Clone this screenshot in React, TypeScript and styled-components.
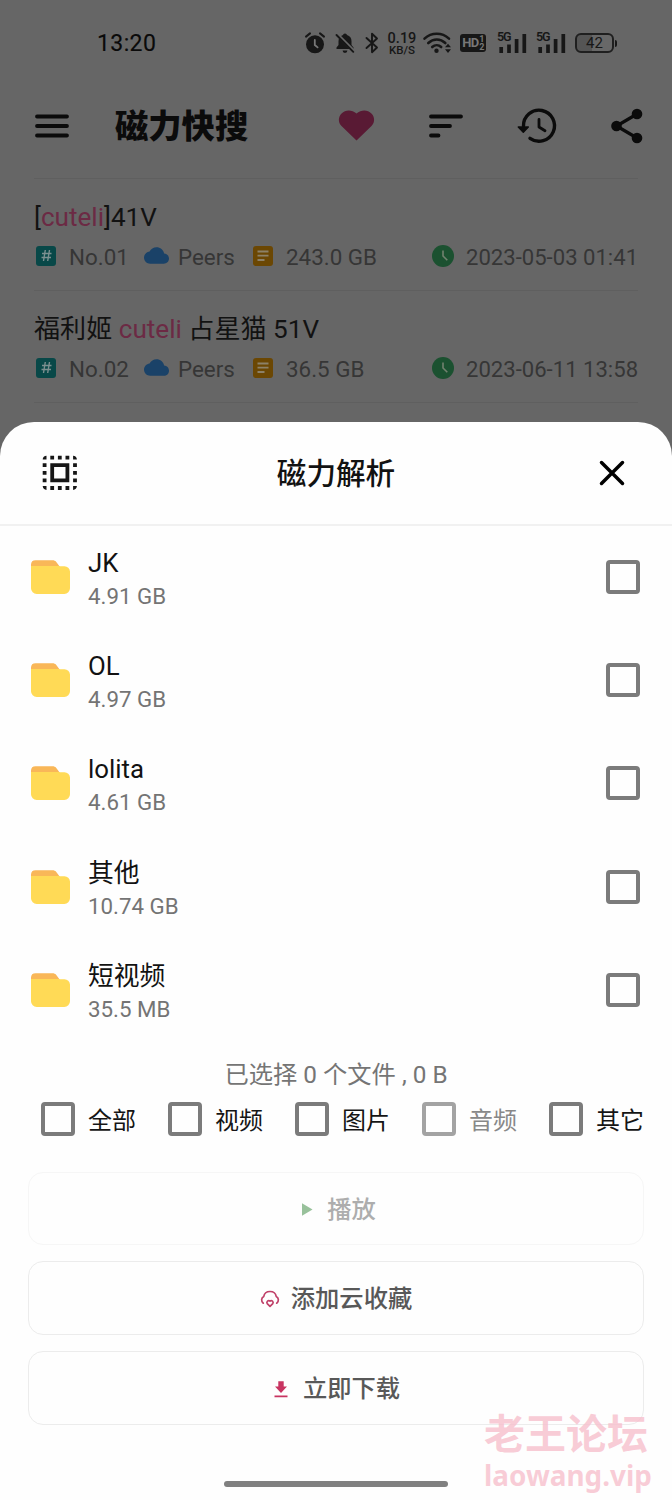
import React from "react";
import styled, { createGlobalStyle } from "styled-components";

const GlobalStyle = createGlobalStyle`
  *, *::before, *::after { box-sizing: border-box; }
  body {
    margin: 0;
    background: #666;
    font-family: Roboto, "Noto Sans CJK SC", sans-serif;
  }
`;

const Screen = styled.div`
  position: relative;
  width: 672px;
  height: 1500px;
  overflow: hidden;
  background: #666;
  color: #121212;
`;

const Icon = styled.svg<{ $left?: number }>`
  display: block;
  flex: none;
  overflow: visible;
  margin-left: ${(p) => p.$left ?? 0}px;
`;

/* ---------- status bar ---------- */

const StatusBar = styled.header`
  display: flex;
  align-items: center;
  justify-content: space-between;
  height: 86px;
  padding: 0 55px 0 97px;
`;

const Clock = styled.time`
  padding-top: 2px;
  font-size: 23px;
  line-height: 28px;
  letter-spacing: 0.4px;
  color: #0a0a0a;
  -webkit-text-stroke: 0.15px #0a0a0a;
`;

const StatusIcons = styled.div`
  display: flex;
  align-items: center;
  color: #171717;
`;

const Speed = styled.div`
  display: flex;
  flex-direction: column;
  align-items: center;
  width: 30px;
  margin: 3px 6px 0 8px;
  font-weight: 500;
  white-space: nowrap;
`;

const SpeedLine = styled.span<{ $size: number; $height: number }>`
  font-size: ${(p) => p.$size}px;
  line-height: ${(p) => p.$height}px;
`;

const HdBadge = styled.div`
  display: flex;
  align-items: center;
  justify-content: center;
  width: 26px;
  height: 18px;
  margin: 0 11px 0 8px;
  border-radius: 3px;
  background: #171717;
  color: #777;
  font-size: 13px;
  font-weight: 700;
  line-height: 18px;
  letter-spacing: -0.8px;
`;

const HdDigits = styled.span`
  display: flex;
  flex-direction: column;
  margin-left: 1px;
  font-size: 9px;
  line-height: 8px;
`;

const Signal = styled.div`
  position: relative;
  width: 30px;
  height: 22px;
  margin-right: 9px;
`;

const SignalLabel = styled.span`
  position: absolute;
  top: -1px;
  left: 0;
  font-size: 12.5px;
  font-weight: 600;
  line-height: 12px;
  letter-spacing: -1.1px;
`;

const Battery = styled.div`
  display: flex;
  align-items: center;
  width: 42px;
`;

const BatteryBody = styled.div`
  width: 39px;
  height: 20px;
  border: 2px solid #1f1f1f;
  border-radius: 6px;
  background: linear-gradient(90deg, #555 0 42%, #686868 42%);
  font-size: 15px;
  line-height: 17px;
  text-align: center;
`;

const BatteryTip = styled.div`
  width: 2px;
  height: 7px;
  margin-left: 1px;
  border-radius: 0 2px 2px 0;
  background: #171717;
`;

/* ---------- app bar ---------- */

const AppBar = styled.nav`
  display: flex;
  align-items: center;
  height: 92px;
  padding: 0 28px 13px 34px;
  color: #0b0b0b;
`;

const AppTitle = styled.h1`
  flex: 1;
  margin: 0 0 0 45px;
  padding-top: 2px;
  font-size: 33.3px;
  font-weight: 900;
  line-height: 40px;
`;

const Actions = styled.div`
  display: flex;
  align-items: center;
`;

/* ---------- results ---------- */

const Results = styled.ul`
  margin: 0 34px;
  padding: 0;
  list-style: none;
`;

const Result = styled.li`
  height: 112px;
  padding-top: 22px;
  border-top: 1px solid #5f5f5f;
  &:last-child {
    height: 113px;
    border-bottom: 1px solid #5f5f5f;
  }
`;

const ResultTitle = styled.h2`
  margin: 0;
  font-size: 26.1px;
  font-weight: 400;
  line-height: 32px;
  white-space: pre;
`;

const Mark = styled.em`
  font-style: normal;
  color: #6c2a44;
`;

const Meta = styled.div`
  display: flex;
  align-items: center;
  height: 30px;
  margin-top: 9px;
  color: #363636;
  font-size: 22.4px;
  line-height: 30px;
  white-space: nowrap;
`;

const MetaItem = styled.span<{ $width?: number; $gap: number }>`
  display: flex;
  align-items: center;
  gap: ${(p) => p.$gap}px;
  ${(p) => (p.$width ? `width: ${p.$width}px;` : "")}
  svg { margin-top: -3px; }
`;

const DateItem = styled(MetaItem)`
  margin-left: auto;
  width: 206px;
  font-size: 22.1px;
`;

const Badge = styled.span<{ $color: string }>`
  display: flex;
  align-items: center;
  justify-content: center;
  width: 20px;
  height: 20px;
  margin: -3px 1px 0 2px;
  border-radius: 3px;
  background: ${(p) => p.$color};
  svg { margin: 0; }
`;

/* ---------- sheet ---------- */

const Sheet = styled.section`
  position: absolute;
  inset: 422px 0 0 0;
  display: flex;
  flex-direction: column;
  border-radius: 34px 34px 0 0;
  background: #fefefe;
`;

const SheetHeader = styled.div`
  display: grid;
  grid-template-columns: 80px 1fr 80px;
  align-items: center;
  height: 104px;
  padding: 0 20px;
  border-bottom: 2px solid #f1f1f1;
`;

const SheetTitle = styled.h2`
  margin: 0;
  padding-top: 2px;
  font-size: 29.6px;
  font-weight: 500;
  line-height: 40px;
  text-align: center;
`;

const Cell = styled.div`
  display: flex;
  justify-content: center;
`;

const Files = styled.ul`
  margin: -0.6px 0 0;
  padding: 0 32px 0 30px;
  list-style: none;
`;

const File = styled.li`
  display: flex;
  align-items: center;
  height: 103.2px;
`;

const FileText = styled.div`
  flex: 1;
  margin: 5px 0 0 18px;
`;

const FileName = styled.div`
  font-size: 25.8px;
  line-height: 33px;
`;

const FileSize = styled.div`
  font-size: 22.3px;
  line-height: 32px;
  color: #747474;
`;

const Box = styled.span<{ $muted?: boolean }>`
  flex: none;
  width: 34px;
  height: 34px;
  border: 4px solid ${(p) => (p.$muted ? "#a3a3a3" : "#7b7b7b")};
  border-radius: 4px;
`;

const Summary = styled.p`
  margin: 15.6px 0 0;
  font-size: 24.3px;
  line-height: 36px;
  text-align: center;
  color: #757575;
`;

const Filters = styled.div`
  display: flex;
  height: 34px;
  margin-top: 9px;
  padding-left: 41px;
`;

const Filter = styled.label<{ $muted?: boolean }>`
  display: flex;
  align-items: center;
  gap: 13px;
  width: 127px;
  flex: none;
  color: ${(p) => (p.$muted ? "#888" : "#151515")};
  font-size: 24px;
  line-height: 34px;
  white-space: nowrap;
`;

const FilterName = styled.span`
  padding-top: 4px;
`;

const Buttons = styled.div`
  display: flex;
  flex-direction: column;
  gap: 16px;
  margin: 36px 28px 0;
`;

const Button = styled.button<{ $gap: number; $shift?: number; $muted?: boolean }>`
  display: flex;
  align-items: center;
  justify-content: center;
  gap: ${(p) => p.$gap}px;
  height: ${(p) => (p.$muted ? 73 : 74)}px;
  padding: 3px 0 0 ${(p) => p.$shift ?? 0}px;
  border: 1px solid ${(p) => (p.$muted ? "#f6f6f6" : "#ececec")};
  border-radius: 15px;
  background: transparent;
  color: ${(p) => (p.$muted ? "#adadad" : "#585858")};
  font-family: inherit;
  font-size: 24.3px;
  font-weight: 500;
  line-height: 36px;
`;

const HomeBar = styled.div`
  width: 224px;
  height: 6px;
  margin: 56px auto 0;
  border-radius: 3px;
  background: #808080;
`;

const Watermark = styled.div`
  position: absolute;
  top: 1406px;
  left: 484px;
  display: flex;
  flex-direction: column;
  color: rgba(247, 190, 204, 0.78);
  font-weight: 700;
  white-space: nowrap;
`;

const WatermarkName = styled.span`
  font-family: "Noto Sans CJK SC", sans-serif;
  font-size: 41px;
  line-height: 50px;
`;

const WatermarkSite = styled.span`
  margin-top: 4px;
  font-family: "Noto Sans", sans-serif;
  font-size: 27.9px;
  line-height: 30px;
`;

const AlarmIcon = () => (
  <Icon width="22" height="22" viewBox="0 0 22 22">
    <circle cx="11" cy="12.3" r="9" fill="currentColor" />
    <path d="M2 4.600 6 1.400M20 4.600 16 1.400" stroke="currentColor" strokeWidth="2" strokeLinecap="round" />
    <path d="M10.800 8v5l2.800 2.400" fill="none" stroke="#777" strokeWidth="1.800" strokeLinecap="round" />
  </Icon>
);

const BellOffIcon = () => (
  <Icon $left={8} width="22" height="22" viewBox="0 0 22 22">
    <path d="M11 1.400a2 2 0 0 1 2 1.700c3 .8 4.500 3.200 4.500 6.200V13l2 2.600V17H2.500v-1.400l2-2.600V9.300c0-3 1.500-5.400 4.500-6.200a2 2 0 0 1 2-1.700ZM8.600 18.500h4.800a2.400 2.400 0 0 1-4.800 0Z" fill="currentColor" />
    <path d="M3.500 2.700 20 19.200" stroke="#666" strokeWidth="3.200" />
    <path d="M2.500 3 19.300 19.800" stroke="currentColor" strokeWidth="1.900" strokeLinecap="round" />
  </Icon>
);

const BluetoothIcon = () => (
  <Icon $left={9} width="14" height="22" viewBox="0 0 14 22" fill="none" stroke="currentColor" strokeWidth="1.900">
    <path d="m1.500 6 10.500 9.500-5 4.700V1.800l5 4.700L1.500 16" strokeLinejoin="round" strokeLinecap="round" />
  </Icon>
);

const WifiIcon = () => (
  <Icon width="29" height="22" viewBox="0 0 29 22" fill="none" stroke="currentColor" strokeWidth="2.600">
    <path d="M1.500 6.600c7-6.400 17.500-6.400 24.500 0M5.300 11c5-4.600 12-4.600 17 0M9.200 15c2.700-2.400 6.300-2.400 9 0" strokeLinecap="round" />
    <circle cx="13.500" cy="18.700" r="2.200" fill="currentColor" stroke="none" />
    <path d="m22 15.300 3-3.600 3 3.600ZM22 17.300l3 3.600 3-3.600Z" fill="currentColor" stroke="none" />
  </Icon>
);

const CellSignal = () => (
  <Signal>
    <SignalLabel>5G</SignalLabel>
    <Icon width="30" height="22" viewBox="0 0 30 22" stroke="currentColor" strokeWidth="3.700">
      <path d="M4.200 15v6M12 12.500V21M19.600 7v14M27.300 2v19" />
    </Icon>
  </Signal>
);

const MenuIcon = () => (
  <Icon width="36" height="30" viewBox="0 0 36 30" stroke="currentColor" strokeWidth="3.800" strokeLinecap="round">
    <path d="M3 5.500h30M3 15h30M3 24.500h30" />
  </Icon>
);

const HeartIcon = () => (
  <Icon width="36" height="34" viewBox="0 0 36 34">
    <path d="M18.500 31.500 3.500 17C-.2 13 .2 7.800 3.600 4.400 7.400.6 13.800.4 18.500 4.600 23.200.4 29.600.6 33.400 4.400 36.800 7.800 37.200 13 33.500 17Z" fill="#591a34" />
  </Icon>
);

const SortIcon = () => (
  <Icon $left={54} width="36" height="30" viewBox="0 0 36 30" stroke="currentColor" strokeWidth="3.800" strokeLinecap="round">
    <path d="M3 5.500h30M3 15h19M3 24.500h7.500" />
  </Icon>
);

const HistoryIcon = () => (
  <Icon $left={53} width="40" height="36" viewBox="0 0 40 36" fill="none" stroke="currentColor" strokeWidth="3.400" strokeLinecap="round">
    <path d="M6.500 18A15.500 15.500 0 1 1 13 30.300" />
    <path d="M22 11.500v7.500l6 3.800" strokeWidth="2.800" strokeLinejoin="round" />
    <path d="M1.300 19h10L6.300 24.200Z" fill="currentColor" strokeWidth="1.500" strokeLinejoin="round" />
  </Icon>
);

const ShareIcon = () => (
  <Icon $left={53} width="34" height="36" viewBox="0 0 34 36" stroke="currentColor" strokeWidth="3.200">
    <path d="M27 6 6.500 18 27 30" fill="none" />
    <g fill="currentColor" stroke="none">
      <circle cx="27" cy="6" r="5.300" />
      <circle cx="6.500" cy="18" r="5.300" />
      <circle cx="27" cy="30" r="5.300" />
    </g>
  </Icon>
);

const HashIcon = () => (
  <Icon width="11" height="13" viewBox="0 0 11 13" stroke="#7b8f8f" strokeWidth="1.400">
    <path d="M4.300 1 2.500 12M8.500 1 6.700 12M1 4.500h9.500M.5 8.500H10" />
  </Icon>
);

const CloudIcon = () => (
  <Icon width="25" height="25" viewBox="0 0 24 24">
    <path fill="#1a4268" d="M19.350 10.040C18.670 6.590 15.640 4 12 4 9.110 4 6.600 5.640 5.350 8.040 2.340 8.360 0 10.910 0 14c0 3.310 2.690 6 6 6h13c2.760 0 5-2.240 5-5 0-2.640-2.050-4.780-4.650-4.960z" />
  </Icon>
);

const NoteIcon = () => (
  <Icon width="12" height="12" viewBox="0 0 12 12" stroke="#8c8168" strokeWidth="1.800">
    <path d="M.5 1.500h11M.5 5.700h11M.5 10h7" />
  </Icon>
);

const TimeIcon = () => (
  <Icon width="22" height="22" viewBox="0 0 22 22">
    <circle cx="11" cy="11" r="11" fill="#1b5130" />
    <path d="M11 5.500V11l4.300 4.300" fill="none" stroke="#72816f" strokeWidth="1.600" />
  </Icon>
);

const SelectAllIcon = () => (
  <Icon width="45.600" height="45.600" viewBox="0 0 24 24">
    <path fill="#161616" d="M3 5h2V3c-1.100 0-2 .9-2 2zm0 8h2v-2H3v2zm4 8h2v-2H7v2zM3 9h2V7H3v2zm10-6h-2v2h2V3zm6 0v2h2c0-1.100-.9-2-2-2zM5 21v-2H3c0 1.100.9 2 2 2zm-2-4h2v-2H3v2zM9 3H7v2h2V3zm2 18h2v-2h-2v2zm8-8h2v-2h-2v2zm0 8c1.100 0 2-.9 2-2h-2v2zm0-12h2V7h-2v2zm0 8h2v-2h-2v2zm-4 4h2v-2h-2v2zm0-16h2V3h-2v2zM7 17h10V7H7v10zm2-8h6v6H9V9z" />
  </Icon>
);

const CloseIcon = () => (
  <Icon width="26" height="26" viewBox="0 0 26 26" stroke="#000" strokeWidth="3.500" strokeLinecap="round">
    <path d="m2.500 2.500 21 21M23.500 2.500l-21 21" />
  </Icon>
);

const FolderIcon = () => (
  <Icon width="40" height="34" viewBox="0 0 40 34">
    <path d="M1 12V4.500A4.500 4.500 0 0 1 5.500.2h17c1.500 0 2.700.5 3.600 1.500L30 7v5Z" fill="#f9b758" />
    <path d="M1 6h27.500c1 0 1.500.3 2.500.3h3.500A5.500 5.500 0 0 1 40 11.500v16.800a5.700 5.700 0 0 1-5.700 5.700H6.700A5.700 5.700 0 0 1 1 28.300Z" fill="#ffda56" />
  </Icon>
);

const PlayIcon = () => (
  <Icon width="12" height="13" viewBox="0 0 12 13">
    <path d="M1 .2 11.500 6.500 1 12.800Z" fill="#98c19b" />
  </Icon>
);

const CloudHeartIcon = () => (
  <Icon width="20" height="18" viewBox="0 0 20 18" fill="none" stroke="#c04169" strokeWidth="1.700" strokeLinecap="round" strokeLinejoin="round">
    <path d="M3.300 13.200A4 4 0 0 1 3.800 6.400C4.300 3.300 6.800 1.500 10 1.500s5.700 1.800 6.200 4.900a4 4 0 0 1 .5 6.800" />
    <path d="M10 16.300 7.200 13.600a1.900 1.900 0 0 1 2.800-2.500 1.900 1.900 0 0 1 2.800 2.500Z" />
  </Icon>
);

const DownloadIcon = () => (
  <Icon width="14" height="17" viewBox="0 0 14 17" fill="#c83461">
    <path d="M4.300.3h5.400v5.200H13L7 12 1 5.500h3.300ZM.5 14.500h13v1.700H.5Z" />
  </Icon>
);

const results = [
  { title: <>[<Mark>cuteli</Mark>]41V</>, no: "No.01", size: "243.0 GB", date: "2023-05-03 01:41" },
  { title: <>福利姬 <Mark>cuteli</Mark> 占星猫 51V</>, no: "No.02", size: "36.5 GB", date: "2023-06-11 13:58" },
];

const files = [
  ["JK", "4.91 GB"],
  ["OL", "4.97 GB"],
  ["lolita", "4.61 GB"],
  ["其他", "10.74 GB"],
  ["短视频", "35.5 MB"],
];

const filters = ["全部", "视频", "图片", "音频", "其它"];

export default function App() {
  return (
    <Screen>
      <GlobalStyle />
      <StatusBar>
        <Clock>13:20</Clock>
        <StatusIcons>
          <AlarmIcon />
          <BellOffIcon />
          <BluetoothIcon />
          <Speed>
            <SpeedLine $size={14.5} $height={12}>0.19</SpeedLine>
            <SpeedLine $size={11.5} $height={11}>KB/S</SpeedLine>
          </Speed>
          <WifiIcon />
          <HdBadge>
            HD
            <HdDigits>
              <span>1</span>
              <span>2</span>
            </HdDigits>
          </HdBadge>
          <CellSignal />
          <CellSignal />
          <Battery>
            <BatteryBody>42</BatteryBody>
            <BatteryTip />
          </Battery>
        </StatusIcons>
      </StatusBar>

      <AppBar>
        <MenuIcon />
        <AppTitle>磁力快搜</AppTitle>
        <Actions>
          <HeartIcon />
          <SortIcon />
          <HistoryIcon />
          <ShareIcon />
        </Actions>
      </AppBar>

      <Results>
        {results.map((r) => (
          <Result key={r.no}>
            <ResultTitle>{r.title}</ResultTitle>
            <Meta>
              <MetaItem $gap={12} $width={110}>
                <Badge $color="#084848"><HashIcon /></Badge>
                {r.no}
              </MetaItem>
              <MetaItem $gap={9} $width={107}>
                <CloudIcon />
                Peers
              </MetaItem>
              <MetaItem $gap={12}>
                <Badge $color="#6b4703"><NoteIcon /></Badge>
                {r.size}
              </MetaItem>
              <DateItem $gap={12}>
                <TimeIcon />
                {r.date}
              </DateItem>
            </Meta>
          </Result>
        ))}
      </Results>

      <Sheet>
        <SheetHeader>
          <Cell><SelectAllIcon /></Cell>
          <SheetTitle>磁力解析</SheetTitle>
          <Cell><CloseIcon /></Cell>
        </SheetHeader>
        <Files>
          {files.map(([name, size]) => (
            <File key={name}>
              <FolderIcon />
              <FileText>
                <FileName>{name}</FileName>
                <FileSize>{size}</FileSize>
              </FileText>
              <Box />
            </File>
          ))}
        </Files>
        <Summary>已选择 0 个文件 , 0 B</Summary>
        <Filters>
          {filters.map((name) => (
            <Filter key={name} $muted={name === "音频"}>
              <Box $muted={name === "音频"} />
              <FilterName>{name}</FilterName>
            </Filter>
          ))}
        </Filters>
        <Buttons>
          <Button $gap={14} $shift={5} $muted><PlayIcon />播放</Button>
          <Button $gap={11}><CloudHeartIcon />添加云收藏</Button>
          <Button $gap={15} $shift={2}><DownloadIcon />立即下载</Button>
        </Buttons>
        <HomeBar />
      </Sheet>

      <Watermark>
        <WatermarkName>老王论坛</WatermarkName>
        <WatermarkSite>laowang.vip</WatermarkSite>
      </Watermark>
    </Screen>
  );
}
